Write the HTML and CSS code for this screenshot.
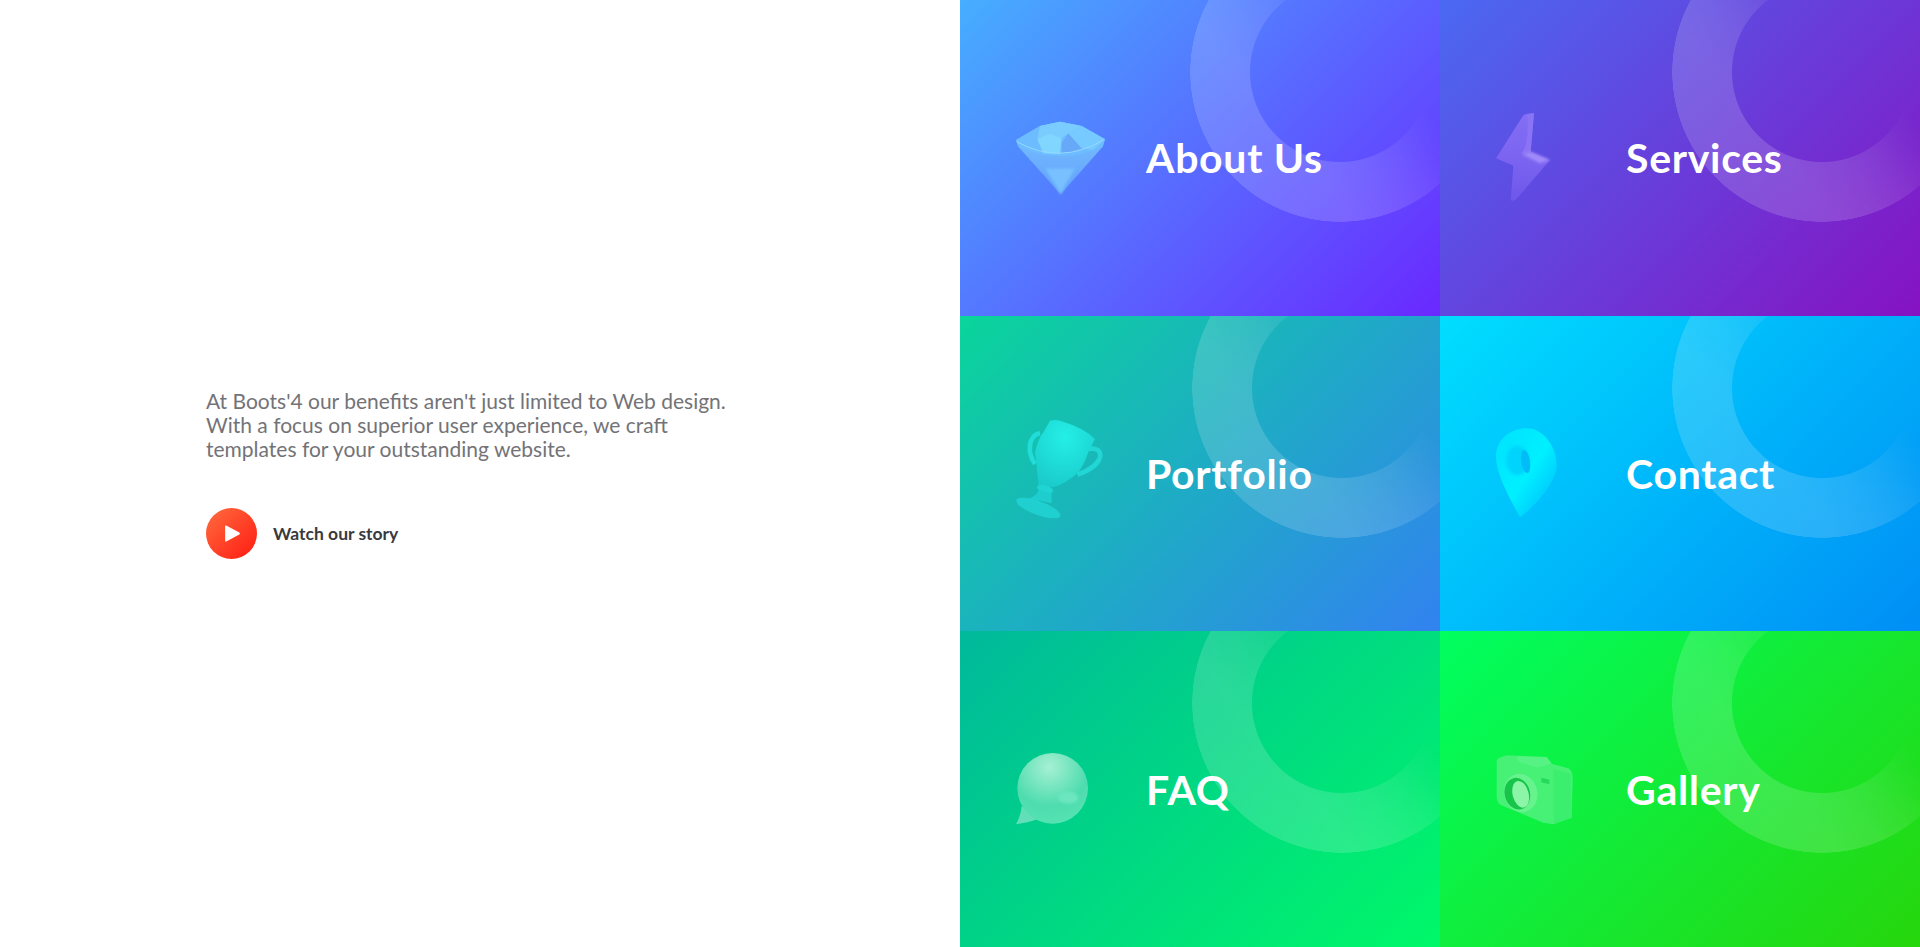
FILE: index.html
```html
<!DOCTYPE html>
<html lang="en">
<head>
  <meta charset="UTF-8" />
  <meta name="viewport" content="width=device-width, initial-scale=1.0" />
  <title>Boots'4</title>
  <link rel="stylesheet" href="styles.css">
</head>
<body>
  <div class="page">
    <section class="intro">
      <p class="intro-text">At Boots'4 our benefits aren't just limited to Web design.<br>With a focus on superior user experience, we craft<br>templates for your outstanding website.</p>
      <a class="story" href="#">
        <span class="story-btn">
          <svg width="17" height="19" viewBox="0 0 16 18"><path d="M2 1.5 L14.5 8 Q15.5 9 14.5 10 L2 16.5 Q1 17 1 16 V2 Q1 1 2 1.5 Z" fill="#fff"/></svg>
        </span>
        <span>Watch our story</span>
      </a>
    </section>

    <nav class="menu">
      <!-- the icon viewBoxes are in 3x panel coordinates -->
      <a class="tile tile-about" href="#">
        <span class="ring"></span>
        <svg class="icon" viewBox="168 294 390 360">
          <defs>
            <linearGradient id="gemLow" x1="0" y1="0" x2="0" y2="1">
              <stop offset="0" stop-color="#7cc4ff"/>
              <stop offset="1" stop-color="#5f9ffb"/>
            </linearGradient>
          </defs>
          <path d="M168 420 L240 378 L300 365 L365 378 L435 418 L428 440 L302 583 L175 440 Z" fill="url(#gemLow)"/>
          <path d="M168 420 L240 378 L300 365 L365 378 L435 418 L428 440 Q300 497 175 440 Z" fill="#6cbcff"/>
          <path d="M240 378 L300 365 L365 378 L325 400 L305 415 L270 400 L232 418 Z" fill="#7accff"/>
          <path d="M232 418 L270 400 L305 415 L300 462 L250 460 Z" fill="#80d6ff"/>
          <path d="M305 430 L325 400 L365 445 L340 455 L305 460 Z" fill="#68a8f9"/>
          <path d="M365 378 L435 418 L400 450 L365 445 L325 400 Z" fill="#76caff"/>
          <path d="M170 425 Q300 497 430 420" fill="none" stroke="#96d8ff" stroke-width="3"/>
          <path class="soft" d="M255 505 L345 505 L302 583 Z" fill="#78c0ff"/>
        </svg>
        <span class="tile-name">About Us</span>
      </a>

      <a class="tile tile-services" href="#">
        <span class="ring"></span>
        <svg class="icon" viewBox="168 294 390 360">
          <defs>
            <linearGradient id="bolt" x1="0" y1="0" x2="0" y2="1">
              <stop offset="0" stop-color="#846ef4"/>
              <stop offset="0.6" stop-color="#7a62f0"/>
              <stop offset="1" stop-color="#6e56ea"/>
            </linearGradient>
          </defs>
          <path d="M282 340 Q262 338 250 346 L168 475 L220 497 L212 600 Q220 606 230 596 L330 480 L272 455 Z" fill="url(#bolt)"/>
          <path d="M262 346 Q274 340 282 340 L272 455 L245 462 Q268 430 262 346 Z" fill="#8a74f5"/>
          <path class="soft" d="M245 462 L272 455 L330 480 L300 490 Z" fill="#a28cfa"/>
        </svg>
        <span class="tile-name">Services</span>
      </a>

      <a class="tile tile-portfolio" href="#">
        <span class="ring"></span>
        <svg class="icon" viewBox="168 294 390 360">
          <defs>
            <radialGradient id="cup" cx="0.5" cy="0.25" r="0.8">
              <stop offset="0" stop-color="#24efe6"/>
              <stop offset="1" stop-color="#1acaca"/>
            </radialGradient>
          </defs>
          <path d="M240 354 C205 362 200 412 225 447" fill="none" stroke="#22dcd8" stroke-width="14"/>
          <path d="M385 402 C435 392 440 448 352 479" fill="none" stroke="#22d6d6" stroke-width="14"/>
          <path d="M270 317 Q290 312 310 320 Q375 340 405 372 L385 412 Q372 450 355 472 Q320 505 280 517 L235 512 Q232 470 225 412 Q235 370 250 352 Z" fill="url(#cup)"/>
          <ellipse cx="255" cy="522" rx="25" ry="11" transform="rotate(15 255 522)" fill="#1fd4d2"/>
          <path d="M236 525 L275 535 L275 565 L205 550 Q230 545 236 525 Z" fill="#1ecdce"/>
          <ellipse cx="235" cy="579" rx="70" ry="21" transform="rotate(20 235 579)" fill="#20cfd0"/>
        </svg>
        <span class="tile-name">Portfolio</span>
      </a>

      <a class="tile tile-contact" href="#">
        <span class="ring"></span>
        <svg class="icon" viewBox="168 294 390 360">
          <defs>
            <linearGradient id="pin" x1="0.2" y1="0.2" x2="0.9" y2="0.9">
              <stop offset="0" stop-color="#00e6ff"/>
              <stop offset="0.45" stop-color="#00f0ff"/>
              <stop offset="1" stop-color="#00c0fe"/>
            </linearGradient>
          </defs>
          <path d="M168 425 C168 370 215 340 260 340 C310 340 350 395 350 450 C350 500 290 570 240 607 C210 550 168 480 168 425 Z" fill="url(#pin)"/>
          <ellipse class="soft" cx="232" cy="436" rx="34" ry="44" fill="#00d4fc"/>
          <ellipse cx="257" cy="440" rx="13" ry="35" transform="rotate(-8 257 440)" fill="#00bcf7"/>
        </svg>
        <span class="tile-name">Contact</span>
      </a>

      <a class="tile tile-faq" href="#">
        <span class="ring"></span>
        <svg class="icon" viewBox="168 294 390 360">
          <defs>
            <radialGradient id="bubble" cx="0.45" cy="0.2" r="0.85">
              <stop offset="0" stop-color="#a6f0d4"/>
              <stop offset="0.65" stop-color="#4edcae"/>
              <stop offset="1" stop-color="#56e4b4"/>
            </radialGradient>
          </defs>
          <path d="M185 525 Q182 555 168 580 Q205 575 232 565 Z" fill="#62dfb8"/>
          <circle cx="278" cy="472" r="106" fill="url(#bubble)"/>
          <ellipse class="soft" cx="325" cy="500" rx="30" ry="18" fill="#6ce6bf"/>
        </svg>
        <span class="tile-name">FAQ</span>
      </a>

      <a class="tile tile-gallery" href="#">
        <span class="ring"></span>
        <svg class="icon" viewBox="168 294 390 360">
          <path d="M170 390 Q172 380 200 373 L320 378 L335 398 L385 412 Q398 420 398 440 L395 560 L340 580 L310 575 L182 522 Q172 515 170 500 Z" fill="#46f176"/>
          <path d="M340 415 L392 430 L395 560 L342 578 Z" fill="#3cee6e"/>
          <path d="M230 376 L320 378 L335 398 L290 410 L235 392 Z" fill="#56f284"/>
          <ellipse cx="242" cy="486" rx="50" ry="58" transform="rotate(-14 242 486)" fill="#66f38d"/>
          <ellipse cx="232" cy="488" rx="38" ry="48" transform="rotate(-14 232 488)" fill="#16c549"/>
          <ellipse cx="242" cy="490" rx="24" ry="41" transform="rotate(-14 242 490)" fill="#8cf5a8"/>
          <path d="M304 440 L328 446 L328 460 L304 454 Z" fill="#27d95b"/>
        </svg>
        <span class="tile-name">Gallery</span>
      </a>
    </nav>
  </div>
</body>
</html>
```

FILE: styles.css
```css
/* Half text, half grid of coloured tiles */
html, body {
  height: 100%;
}
body {
  margin: 0;
  background: #fff;
  font-family: 'Lato', 'Liberation Sans', sans-serif;
}
a {
  text-decoration: none;
}
.page {
  display: grid;
  grid-template-columns: 1fr 1fr;
  height: 100vh;
  overflow: hidden;
}

.intro {
  display: flex;
  flex-direction: column;
  justify-content: center;
  padding-left: 206px;
}
.intro-text {
  margin: 0 0 47px;
  font-size: 21px;
  line-height: 24px;
  color: #737377;
}
.story {
  display: flex;
  align-items: center;
  gap: 16px;
  font-size: 17.5px;
  font-weight: 700;
  color: #3a3a3c;
}
.story-btn {
  display: flex;
  align-items: center;
  justify-content: center;
  width: 51px;
  height: 51px;
  padding-left: 2px;
  box-sizing: border-box;
  border-radius: 50%;
  background: linear-gradient(135deg, #ff6d40, #ff1a12);
}

.menu {
  display: grid;
  grid-template-columns: 1fr 1fr;
  grid-template-rows: repeat(3, 1fr);
}
.tile {
  position: relative;
  display: flex;
  align-items: center;
  overflow: hidden;
  padding-left: 56px;
  color: #fff;
}
.tile-about { background: linear-gradient(135deg, #46aeff, #6a28ff); }
.tile-services { background: linear-gradient(135deg, #4a69f2, #8612c2); }
.tile-portfolio { background: linear-gradient(135deg, #0ad59a, #3282f0); }
.tile-contact { background: linear-gradient(135deg, #00deff, #008ef5); }
.tile-faq { background: linear-gradient(135deg, #00b99c, #00f868); }
.tile-gallery { background: linear-gradient(135deg, #00ff60, #26d60c); }

/* decorative ring, strongest low on the left and gone towards the top right */
.ring {
  position: absolute;
  top: -78px;
  left: 232px;
  width: 300px;
  height: 300px;
  background: linear-gradient(51deg, rgba(255, 255, 255, 0.15), rgba(255, 255, 255, 0.16) 130px, rgba(255, 255, 255, 0.13) 170px, rgba(255, 255, 255, 0.09) 200px, rgba(255, 255, 255, 0.04) 228px, rgba(255, 255, 255, 0) 255px);
  -webkit-mask: radial-gradient(circle, transparent 89.5px, #000 90.5px, #000 149.5px, transparent 150px);
  mask: radial-gradient(circle, transparent 89.5px, #000 90.5px, #000 149.5px, transparent 150px);
}
.tile-about .ring {
  left: 230px;
}
.icon {
  position: relative;
  flex: none;
  width: 130px;
  height: 120px;
  filter: blur(0.4px);
}
.soft {
  filter: blur(5px);
}
.tile-name {
  position: relative;
  font-size: 41px;
  font-weight: 700;
  letter-spacing: 0.7px;
  white-space: nowrap;
}
```
